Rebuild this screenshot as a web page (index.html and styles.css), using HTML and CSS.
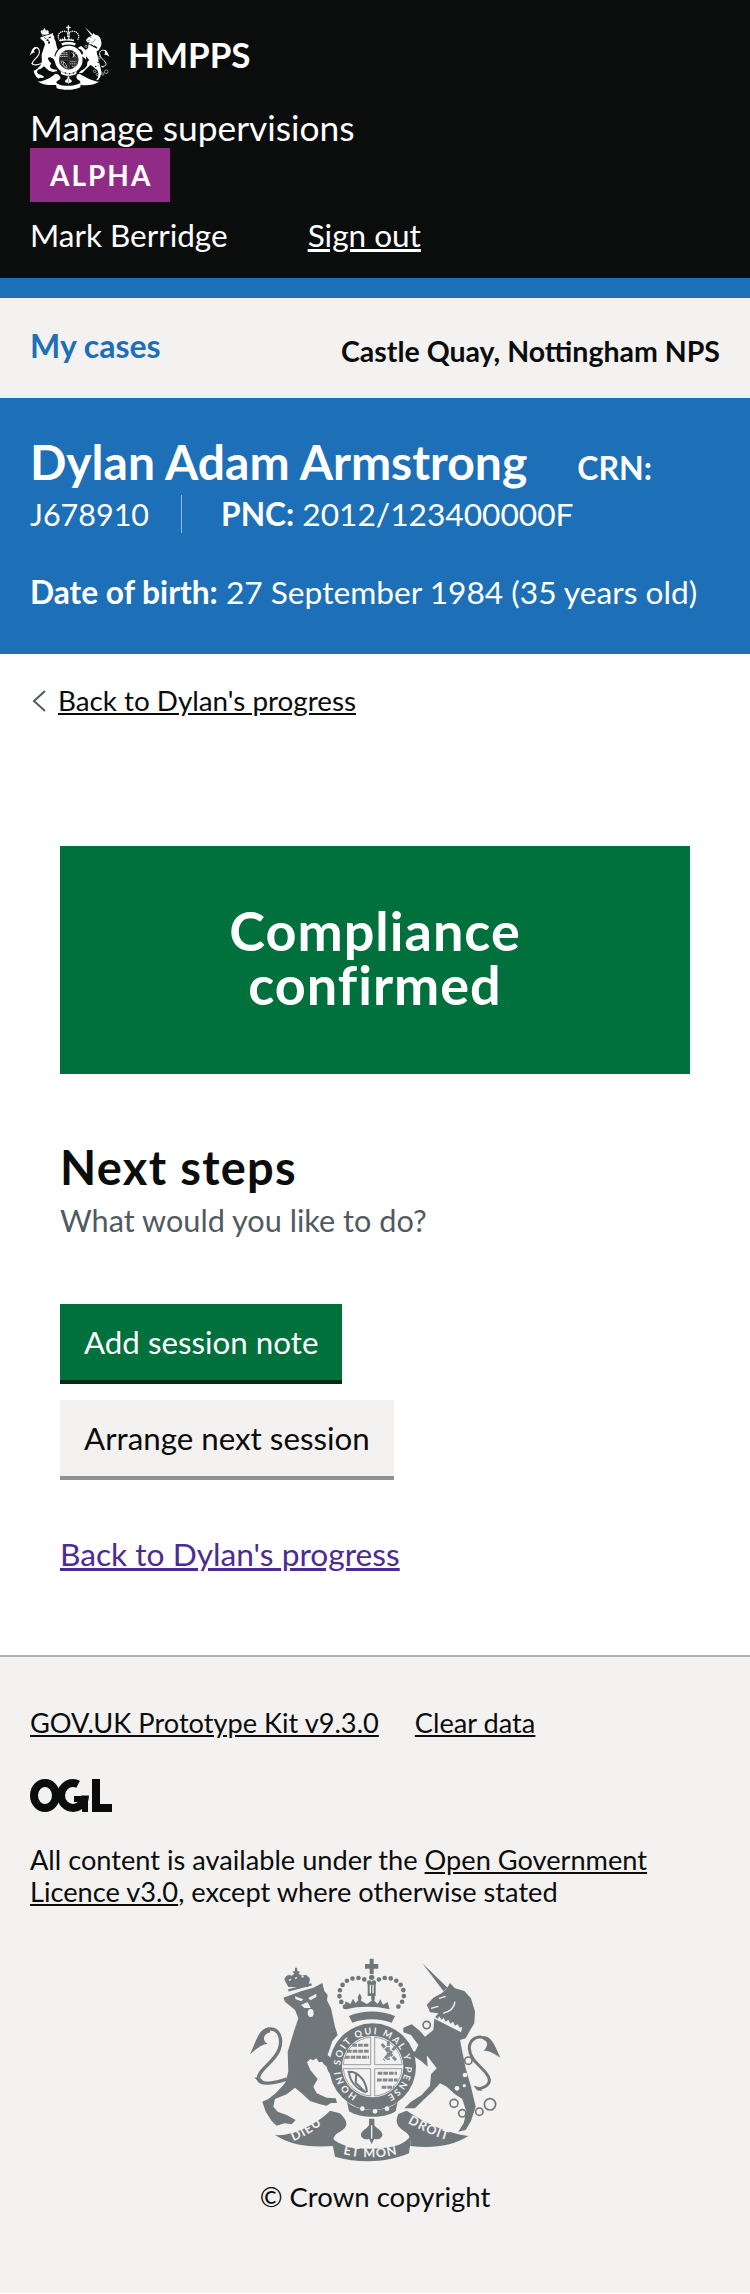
FILE: index.html
```html
<!DOCTYPE html>
<html lang="en">

<head>
    <meta charset="UTF-8">
    <meta name="viewport" content="width=device-width, initial-scale=1.0">
    <title>Compliance confirmed - Manage supervisions</title>
    <link rel="stylesheet" href="styles.css">
</head>

<body>

    <!-- Royal arms, used in header and footer -->
    <svg class="defs" width="0" height="0">
        <symbol id="crest" viewBox="0 0 780 630">
            <!-- lion -->
            <path d="M130 96l-12-22c2-12 14-18 22-12l8-6-6-6 8-2 0-10 6 0 1 10 8 2-4 6 10 6c10-6 22 0 24 12l-6 22z"/>
            <path class="cut-line" d="M132 76l6-3M150 70l6-2M170 66l6-2M190 64l-2 0"/>
            <path class="line-thin" d="M130 106L200 88"/>
            <path d="M115 128L170 108L205 98L232 84L238 108L248 120L246 136L258 160L270 215L278 240L262 258L248 300L262 312L272 330L290 350L288 370L270 372L258 360L250 350L244 334L236 328L232 320L222 322L214 310L204 316L196 312L186 322L196 345L218 372L205 395L215 415L245 428L272 430L276 444L258 444L245 452L225 448L195 438L170 415L150 398L125 418L90 432L85 455L98 470L125 480L152 495L140 508L118 505L95 512L80 498L62 470L52 440L70 432L92 415L120 385L130 350L128 290L148 225L160 190L150 165L120 140Z"/>
            <path class="cut" d="M150 124l25 9-6 6-18-7zM214 116l-24 13 6 7 18-10zM168 150l20-9 9 18-18 0z"/>
            <ellipse class="cut" cx="197" cy="174" rx="9" ry="12"/>
            <path class="line" d="M125 372C90 385 45 392 40 372C38 345 85 325 102 285C115 250 100 220 75 222C60 224 52 240 42 255"/>
            <path d="M72 217C40 222 35 255 15 298C35 280 50 268 68 266C52 258 52 238 76 232Z"/>
            <path d="M42 366L28 368 42 380 60 382Z"/>

            <!-- unicorn -->
            <g transform="translate(390 0)">
                <path d="M142 25L218 98L205 108Z"/>
                <path d="M155 150L175 128L200 115L216 100L225 84L240 100L268 108L288 130L300 170L298 205L282 232L272 250L255 255L262 290L272 340L288 395L302 455L288 498L272 525L250 530L266 505L274 470L262 432L240 418L215 395L195 385L172 410L145 435L120 460L88 460L108 440L140 420L165 392L168 358L185 340L170 320L155 300L158 335L138 318L112 300L98 282L120 290L130 270L108 240L85 232L85 218L110 208L135 228L150 245L175 225L178 190L190 175L165 172L160 160Z"/>
                <path class="cut" d="M180 186l8 6 4-8 8 10 6-6 6 12 8-6 6 12 8-6 6 12 8-4 6 10 8-2-4 16-90-46z"/>
                <path d="M186 200l78 40-2 5-78-40z"/>
                <path class="cut-line" d="M192 130l20-6M168 160l22-6M240 140c-2 18-14 30-36 35"/>
                <circle class="cut" cx="270" cy="360" r="7"/>
                <circle class="cut" cx="246" cy="400" r="7"/>
                <circle class="cut" cx="268" cy="392" r="5"/>
                <circle class="ring" cx="155" cy="210" r="11"/>
                <circle class="ring" cx="147" cy="293" r="11"/>
                <circle class="ring" cx="280" cy="317" r="11"/>
                <circle class="ring" cx="237" cy="445" r="12"/>
                <circle class="ring" cx="262" cy="475" r="11"/>
                <circle class="ring" cx="313" cy="470" r="11"/>
                <circle class="ring" cx="345" cy="448" r="17"/>
                <path class="line-tail" d="M310 402C335 395 350 385 340 365C325 335 285 320 283 280C283 250 310 240 330 250"/>
                <path d="M328 243C355 248 362 280 376 308C356 295 345 287 325 287C340 275 340 258 325 254Z"/>
                <path d="M312 396L296 392 306 406 322 408Z"/>
            </g>

            <!-- crown, shield and ribbon share the coordinates of the middle -->
            <g transform="translate(-60 -45)">
                <path d="M434 56h12v16h14v14h-14v16h-12v-16h-14v-14h14z"/>
                <circle cx="440" cy="112" r="8"/>
                <path class="dots" d="M360 200c-36-34-10-88 38-86 16 0 30 8 42 20 12-12 26-20 42-20 48-2 74 52 38 86"/>
                <path d="M428 126h24v42h-24z"/>
                <path class="cut-line" d="M436 134v26M444 134v26"/>
                <path d="M356 206l6-22 14 8 8-16 8 14 8-10-2-8 6-12 6 12-2 10 18 10 14-10-2-10 6-12 6 12-2 10 10 10 8-14 8 16 14-8 6 22c-44-10-92-10-130 0z"/>
                <path d="M372 228c40-18 96-18 138 0l-10 20c-36-14-84-14-118 0z"/>

                <circle cx="443" cy="380" r="130"/>
                <circle class="cut" cx="443" cy="380" r="92"/>
                <path class="quarter" d="M437 374H355A88 88 0 0 1 437 292zM449 374V292A88 88 0 0 1 531 374zM437 386V468A88 88 0 0 1 355 386zM449 386H531A88 88 0 0 1 449 468z"/>
                <path class="hatch" d="M382 316h50M366 334h66M360 352h72M470 312l44 50M512 320l-36 40M490 304v56M458 400h58M456 420h62M470 442h38"/>
                <path class="harp" d="M368 396c22-4 54 16 58 60M394 400l-2 28 30 30M372 398c4 28 24 50 52 60"/>
                <path d="M366 486c32 30 118 34 152 0l-6 28c-32 22-106 22-140 0z"/>
                <circle class="cut" cx="412" cy="506" r="7"/>
                <circle class="cut" cx="450" cy="514" r="7"/>
                <circle class="cut" cx="486" cy="506" r="7"/>

                <!-- motto ribbon -->
                <path d="M150 585C200 590 280 550 315 512L345 520C370 545 372 560 345 575C325 585 320 600 330 618C270 622 200 620 150 585Z"/>
                <path d="M318 590C330 605 345 610 370 620C420 630 480 628 520 615C540 608 555 595 560 580L552 640C480 670 400 670 330 650Z"/>
                <path d="M730 588C670 580 600 550 545 512L520 522C510 545 515 560 540 575C555 585 560 600 555 618C620 625 680 620 730 588Z"/>
                <path d="M408 582c4-12 16-14 24-26v-20h16v20c8 10 20 14 24 26 2 12-14 20-24 14l-8 16-8-16c-10 6-26-2-24-14z"/>
                <path class="cut-line" d="M440 556v40"/>
            </g>
        </symbol>
    </svg>

    <header class="site-header">
        <div class="brand">
            <svg class="crest" viewBox="0 0 780 630"><use href="#crest"/></svg>
            <span class="brand-name">HMPPS</span>
        </div>
        <div class="service-name">Manage supervisions</div>
        <strong class="phase-tag">ALPHA</strong>
        <div class="user-row">
            <span class="user-name">Mark Berridge</span>
            <a href="#" class="sign-out">Sign out</a>
        </div>
    </header>
    <div class="blue-band"></div>

    <nav class="sub-nav">
        <a href="#" class="cases-link">My cases</a>
        <strong class="location">Castle Quay, Nottingham NPS</strong>
    </nav>

    <section class="offender">
        <div class="offender-name-row">
            <h1 class="offender-name">Dylan Adam Armstrong</h1>
            <strong class="crn-label">CRN:</strong>
        </div>
        <div class="offender-ids">
            <span class="crn">J678910</span>
            <span class="pnc"><strong>PNC:</strong> 2012/123400000F</span>
        </div>
        <div class="offender-dob"><strong>Date of birth:</strong> 27 September 1984 (35 years old)</div>
    </section>

    <a href="#" class="back-link">
        <svg class="chevron" viewBox="0 0 14 22"><path d="M13 1L2 11l11 10"/></svg>
        <span>Back to Dylan's progress</span>
    </a>

    <main class="content">
        <div class="confirm-panel">
            <h2>Compliance confirmed</h2>
        </div>

        <h2 class="next-title">Next steps</h2>
        <p class="next-hint">What would you like to do?</p>

        <div class="button-stack">
            <a href="#" class="button button-primary">Add session note</a>
            <a href="#" class="button button-secondary">Arrange next session</a>
        </div>

        <a href="#" class="visited-link">Back to Dylan's progress</a>
    </main>

    <footer class="site-footer">
        <div class="footer-links">
            <a href="#">GOV.UK Prototype Kit v9.3.0</a>
            <a href="#">Clear data</a>
        </div>

        <svg class="ogl" viewBox="0 0 82 33" role="img" aria-label="Open Government Licence">
            <ellipse cx="15" cy="16.5" rx="11" ry="12.5" class="ogl-ring"/>
            <ellipse cx="43" cy="16.5" rx="12" ry="12.5" class="ogl-ring ogl-open" pathLength="100"/>
            <rect x="44" y="17" width="14" height="6"/>
            <rect x="52" y="17" width="6" height="16"/>
            <rect x="62" y="0" width="8" height="33"/>
            <rect x="62" y="25" width="20" height="8"/>
        </svg>

        <p class="licence">All content is available under the <a href="#">Open Government Licence v3.0</a>, except where otherwise stated</p>

        <svg class="crest crest-large" viewBox="0 0 780 630">
            <use href="#crest"/>
            <g transform="translate(-60 -45)">
                <path id="garter" class="none" d="M397.500 465.600A97 97 0 1 1 488.500 465.600"/>
                <path id="ribbon-left" class="none" d="M205 603C240 590 280 565 312 535"/>
                <path id="ribbon-mid" class="none" d="M354 642C410 656 470 656 528 640"/>
                <path id="ribbon-right" class="none" d="M548 548C590 572 640 596 690 606"/>
                <text class="crest-text garter-text"><textPath href="#garter">HONI SOIT QUI MAL Y PENSE</textPath></text>
                <text class="crest-text"><textPath href="#ribbon-left">DIEU</textPath></text>
                <text class="crest-text"><textPath href="#ribbon-mid">ET MON</textPath></text>
                <text class="crest-text"><textPath href="#ribbon-right">DROIT</textPath></text>
            </g>
        </svg>
        <div class="copyright">© Crown copyright</div>
    </footer>

</body>

</html>
```

FILE: styles.css
```css
html, body {
    margin: 0;
    padding: 0;
}

body {
    font-family: Lato, "Noto Sans", sans-serif;
    color: #0b0c0c;
    background-color: #fff;
}

a {
    color: inherit;
}

.defs {
    display: block;
    height: 0;
}

/* Crest */
.crest {
    display: block;
    flex: none;
    width: 83px;
    height: 67px;
    margin-left: -2px;
    color: #fff;
    fill: currentColor;
    --crest-bg: #0b0c0c;
}

.crest-large {
    width: 260px;
    height: 210px;
    margin: 47px auto 0;
    color: #6f777b;
    --crest-bg: #f3f2f1;
}

.line {
    fill: none;
    stroke: currentColor;
    stroke-width: 10;
}

.line-thin {
    fill: none;
    stroke: currentColor;
    stroke-width: 7;
}

.line-tail {
    fill: none;
    stroke: currentColor;
    stroke-width: 9;
}

.dots {
    fill: none;
    stroke: currentColor;
    stroke-width: 14;
    stroke-linecap: round;
    stroke-dasharray: 0 18;
}

.cut {
    fill: var(--crest-bg);
}

.cut-line {
    fill: none;
    stroke: var(--crest-bg);
    stroke-width: 4;
}

.ring {
    fill: none;
    stroke: currentColor;
    stroke-width: 5;
}

.quarter {
    fill: var(--crest-bg);
    stroke: currentColor;
    stroke-width: 2;
}

.hatch {
    fill: none;
    stroke: currentColor;
    stroke-width: 9;
    stroke-dasharray: 14 3;
    opacity: 0.85;
}

.harp {
    fill: none;
    stroke: currentColor;
    stroke-width: 6;
}

.none {
    fill: none;
}

.crest-text {
    fill: var(--crest-bg);
    font-size: 38px;
    font-weight: 700;
    letter-spacing: 3px;
}

.garter-text {
    font-size: 28px;
    letter-spacing: 5.5px;
}

/* Header */
.site-header {
    background-color: #0b0c0c;
    color: #fff;
    padding: 24px 30px 0;
    height: 254px;
}

.brand {
    display: flex;
    align-items: center;
    gap: 17px;
}

.brand-name {
    font-size: 35px;
    font-weight: 700;
    line-height: 42px;
    margin-bottom: 8px;
}

.service-name {
    font-size: 35.3px;
    line-height: 40px;
    margin-top: 17px;
}

.phase-tag {
    display: block;
    width: 140px;
    height: 54px;
    box-sizing: border-box;
    margin-top: 0;
    padding-left: 20px;
    background-color: #912b88;
    font-size: 28px;
    line-height: 54px;
    letter-spacing: 2px;
}

.user-row {
    display: flex;
    gap: 80px;
    font-size: 31.5px;
    line-height: 40px;
    margin-top: 13px;
}

.blue-band {
    height: 20px;
    background-color: #1d70b8;
}

/* Sub navigation */
.sub-nav {
    display: flex;
    justify-content: space-between;
    align-items: flex-start;
    height: 100px;
    box-sizing: border-box;
    padding: 28px 30px 0;
    background-color: #f3f2f1;
}

.cases-link {
    color: #1d70b8;
    font-size: 32px;
    font-weight: 700;
    line-height: 40px;
    text-decoration: none;
}

.location {
    font-size: 28.5px;
    line-height: 40px;
    margin-top: 5px;
}

/* Offender details */
.offender {
    background-color: #1d70b8;
    color: #fff;
    height: 256px;
    box-sizing: border-box;
    padding: 36px 30px 0;
}

.offender-name-row {
    display: flex;
    align-items: baseline;
    gap: 50px;
}

.offender-name {
    margin: 0;
    font-size: 48px;
    line-height: 56px;
}

.crn-label {
    font-size: 32px;
}

.offender-ids {
    display: flex;
    font-size: 31.7px;
    line-height: 38px;
    margin-top: 5px;
}

.crn {
    font-size: 30.5px;
    padding-right: 32px;
    margin-right: 39px;
    border-right: 1px solid rgba(255, 255, 255, 0.5);
}

.offender-dob {
    font-size: 31.7px;
    line-height: 38px;
    margin-top: 40px;
}

/* Back link */
.back-link {
    display: flex;
    align-items: center;
    gap: 12px;
    padding: 27px 30px 0 32px;
    font-size: 27.8px;
    line-height: 40px;
}

.chevron {
    width: 14px;
    height: 22px;
    fill: none;
    stroke: #505a5f;
    stroke-width: 2;
}

/* Main content */
.content {
    padding: 125px 60px 0;
}

.confirm-panel {
    background-color: #00703c;
    color: #fff;
    height: 228px;
    box-sizing: border-box;
    padding: 58px 140px 0;
    text-align: center;
}

.confirm-panel h2 {
    margin: 0;
    font-size: 54px;
    line-height: 54px;
    letter-spacing: 1px;
}

.next-title {
    margin: 66px 0 0;
    font-size: 47px;
    line-height: 54px;
    letter-spacing: 1.3px;
}

.next-hint {
    margin: 7px 0 0;
    font-size: 30.7px;
    line-height: 40px;
    color: #505a5f;
}

.button-stack {
    display: flex;
    flex-direction: column;
    align-items: flex-start;
    gap: 16px;
    margin-top: 63px;
}

.button {
    display: block;
    box-sizing: border-box;
    height: 80px;
    padding: 0 24px;
    font-size: 31.3px;
    line-height: 76px;
    text-decoration: none;
}

.button-primary {
    background-color: #00703c;
    color: #fff;
    box-shadow: inset 0 -4px 0 #002d18;
}

.button-secondary {
    background-color: #f3f2f1;
    color: #0b0c0c;
    box-shadow: inset 0 -4px 0 #929191;
}

.visited-link {
    display: block;
    margin-top: 54px;
    font-size: 31.7px;
    line-height: 40px;
    color: #4c2c92;
}

/* Footer */
.site-footer {
    margin-top: 81px;
    height: 638px;
    box-sizing: border-box;
    padding: 48px 30px 0;
    background-color: #f3f2f1;
    border-top: 2px solid #b1b4b6;
}

.footer-links {
    display: flex;
    gap: 36px;
    font-size: 27.2px;
    line-height: 36px;
}

.ogl {
    display: block;
    width: 82px;
    height: 33px;
    margin-top: 38px;
    fill: #0b0c0c;
}

.ogl-ring {
    fill: none;
    stroke: #0b0c0c;
    stroke-width: 8;
}

.ogl-open {
    stroke-dasharray: 82 18;
    stroke-dashoffset: 0;
}

.licence {
    margin: 32px 0 0;
    font-size: 27.2px;
    line-height: 32px;
}

.copyright {
    margin-top: 14px;
    text-align: center;
    font-size: 27.5px;
    line-height: 36px;
}
```
